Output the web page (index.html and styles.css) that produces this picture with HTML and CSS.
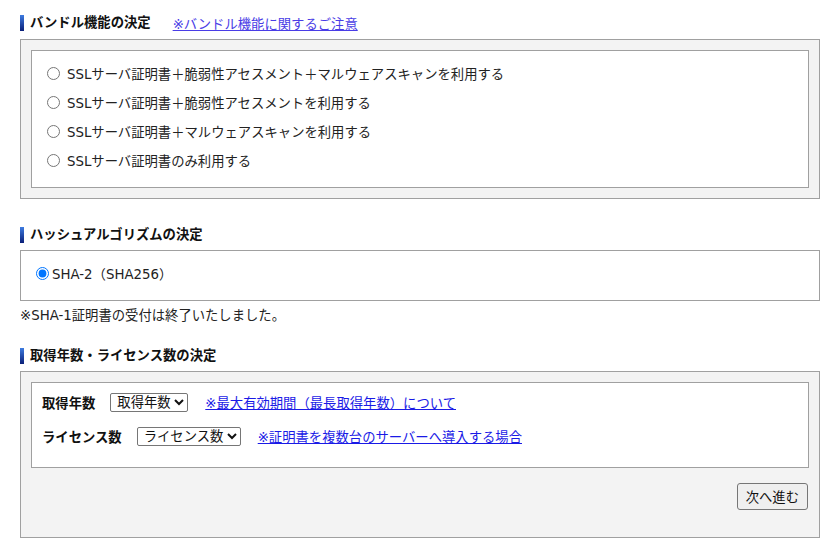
FILE: index.html
```html
<!DOCTYPE html>
<html lang="ja">
<head>
<meta charset="utf-8">
<title>SSL</title>
<link rel="stylesheet" href="styles.css">
</head>
<body>
<div class="page">
  <div class="heading heading-first">
    <span class="bar"></span>
    <span class="heading-text">バンドル機能の決定</span>
    <a class="heading-link" href="#">※バンドル機能に関するご注意</a>
  </div>
  <div class="outer">
    <div class="inner bundle">
      <label class="radio-row"><input type="radio" name="bundle"><span>SSLサーバ証明書＋脆弱性アセスメント＋マルウェアスキャンを利用する</span></label>
      <label class="radio-row"><input type="radio" name="bundle"><span>SSLサーバ証明書＋脆弱性アセスメントを利用する</span></label>
      <label class="radio-row"><input type="radio" name="bundle"><span>SSLサーバ証明書＋マルウェアスキャンを利用する</span></label>
      <label class="radio-row"><input type="radio" name="bundle"><span>SSLサーバ証明書のみ利用する</span></label>
    </div>
  </div>

  <div class="heading heading-second">
    <span class="bar"></span>
    <span class="heading-text">ハッシュアルゴリズムの決定</span>
  </div>
  <div class="hash-box">
    <label class="hash-row"><input type="radio" name="hash" checked><span>SHA-2（SHA256）</span></label>
  </div>
  <p class="note">※SHA-1証明書の受付は終了いたしました。</p>

  <div class="heading heading-third">
    <span class="bar"></span>
    <span class="heading-text">取得年数・ライセンス数の決定</span>
  </div>
  <div class="outer outer-last">
    <div class="inner terms">
      <div class="term-row">
        <span class="term-label">取得年数</span>
        <select class="term-select"><option>取得年数</option></select>
        <a class="term-link" href="#">※最大有効期間（最長取得年数）について</a>
      </div>
      <div class="term-row">
        <span class="term-label">ライセンス数</span>
        <select class="term-select"><option>ライセンス数</option></select>
        <a class="term-link" href="#">※証明書を複数台のサーバーへ導入する場合</a>
      </div>
    </div>
    <div class="actions">
      <button class="next" type="button">次へ進む</button>
    </div>
  </div>
</div>
</body>
</html>
```

FILE: styles.css
```css
html, body {
  margin: 0;
  padding: 0;
  background: #fff;
}
body {
  font-family: "DejaVu Sans", "Noto Sans CJK JP", sans-serif;
  font-size: 13.33px;
  color: #222;
}
.page {
  padding: 13px 20px 0 20px;
  width: 800px;
}
.heading {
  display: flex;
  align-items: center;
  height: 20px;
  margin-bottom: 6px;
}
.heading-second { margin-top: 26px; margin-bottom: 5px; }
.heading-third { margin-top: 20px; margin-bottom: 5px; }
.bar {
  width: 4px;
  height: 16px;
  background: linear-gradient(#3d7be0, #0a1f78);
  margin-right: 6px;
}
.heading-text {
  font-weight: bold;
  color: #111;
  line-height: 20px;
}
.heading-link {
  margin-left: 22px;
  color: #4a3de6;
  text-decoration: underline;
}
.outer {
  border: 1px solid #a0a0a0;
  background: #f3f3f3;
  padding: 10px;
}
.inner {
  border: 1px solid #a0a0a0;
  background: #fff;
}
.bundle {
  padding: 8px 15px 12px 15px;
}
.radio-row {
  display: flex;
  align-items: center;
  height: 29px;
  gap: 7px;
}
.radio-row input,
.hash-row input {
  margin: 0;
  width: 13px;
  height: 13px;
}
.hash-box {
  border: 1px solid #a0a0a0;
  padding: 12px 15px 17px 15px;
}
.hash-row {
  display: flex;
  align-items: center;
  height: 20px;
  gap: 3px;
}
.note {
  margin: 5px 0 0 0;
  line-height: 20px;
}
.terms {
  padding: 9px 10px 21px 10px;
}
.term-row {
  display: flex;
  align-items: center;
  height: 20px;
}
.term-row + .term-row {
  margin-top: 14px;
}
.term-label {
  font-weight: bold;
  color: #111;
  margin-right: 15px;
}
.term-select {
  font-family: "DejaVu Sans", "Noto Sans CJK JP", sans-serif;
  font-size: 13.33px;
  height: 19px;
  padding: 0 0 0 2px;
  border: 1px solid #767676;
  border-radius: 2px;
  background: #fff;
  color: #111;
  margin-right: 17px;
}
.term-link {
  color: #1a1ae6;
  text-decoration: underline;
}
.actions {
  display: flex;
  justify-content: flex-end;
  padding: 15px 1px 17px 0;
}
.next {
  font-family: "DejaVu Sans", "Noto Sans CJK JP", sans-serif;
  font-size: 13.33px;
  color: #111;
  height: 27px;
  padding: 0 8px;
  border: 1px solid #767676;
  border-radius: 3px;
  background: #efefef;
}
```
